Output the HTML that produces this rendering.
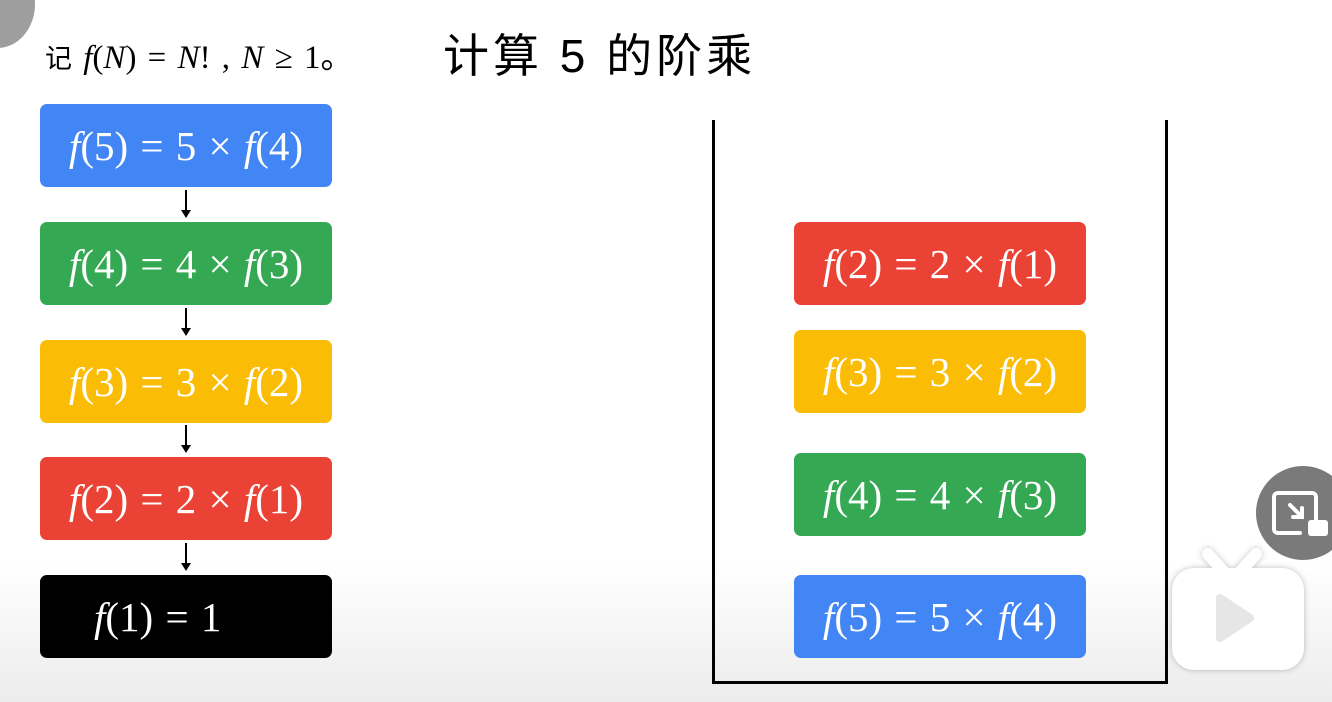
<!DOCTYPE html>
<html><head><meta charset="utf-8"><style>
body{margin:0;width:1332px;height:702px;overflow:hidden;position:relative;background:linear-gradient(#fff 0,#fff 560px,#ececec 702px);font-family:"Liberation Serif",serif}
.b{position:absolute;width:292px;height:83px;border-radius:7px;color:#fff;font-size:41px;display:flex;align-items:center;justify-content:center;white-space:nowrap;word-spacing:2px}
.b i{font-style:italic}
.bl{background:#4285f4}.g{background:#34a853}.y{background:#fbbc05}.r{background:#ea4335}.k{background:#000}
.a{position:absolute;left:185px;width:2px;height:26px;background:#000}
.a:after{content:"";position:absolute;left:-4px;bottom:-2px;border-left:5px solid transparent;border-right:5px solid transparent;border-top:8px solid #000}
.ln{position:absolute;background:#000}
</style></head><body>
<div style="position:absolute;left:-40px;top:-40px;width:75px;height:88px;border-radius:50%;background:#9e9e9e"></div>
<div style="position:absolute;left:45px;top:30px;font-size:33px;color:#000;white-space:nowrap;word-spacing:3px"><span style="font-family:'Noto Sans CJK SC',sans-serif;font-size:27px">记</span> <i>f</i>(<i>N</i>) = <i>N</i>! , <i>N</i> ≥ 1<span style="font-family:'Noto Sans CJK SC',sans-serif">。</span></div>
<div style="position:absolute;left:443px;top:20px;font-family:'Liberation Sans','Noto Sans CJK SC',sans-serif;font-size:46px;color:#000;white-space:nowrap;letter-spacing:4px">计算 5 的阶乘</div>

<div class="b bl" style="left:40px;top:104px"><span><i>f</i>(5) = 5 × <i>f</i>(4)</span></div>
<div class="a" style="top:190px"></div>
<div class="b g" style="left:40px;top:222px"><span><i>f</i>(4) = 4 × <i>f</i>(3)</span></div>
<div class="a" style="top:308px"></div>
<div class="b y" style="left:40px;top:340px"><span><i>f</i>(3) = 3 × <i>f</i>(2)</span></div>
<div class="a" style="top:425px"></div>
<div class="b r" style="left:40px;top:457px"><span><i>f</i>(2) = 2 × <i>f</i>(1)</span></div>
<div class="a" style="top:543px"></div>
<div class="b k" style="left:40px;top:575px;justify-content:flex-start"><span style="margin-left:54px"><i>f</i>(1) = 1</span></div>

<div class="ln" style="left:712px;top:120px;width:3px;height:564px"></div>
<div class="ln" style="left:1165px;top:120px;width:3px;height:564px"></div>
<div class="ln" style="left:712px;top:681px;width:456px;height:3px"></div>

<div class="b r" style="left:794px;top:222px"><span><i>f</i>(2) = 2 × <i>f</i>(1)</span></div>
<div class="b y" style="left:794px;top:330px"><span><i>f</i>(3) = 3 × <i>f</i>(2)</span></div>
<div class="b g" style="left:794px;top:453px"><span><i>f</i>(4) = 4 × <i>f</i>(3)</span></div>
<div class="b bl" style="left:794px;top:575px"><span><i>f</i>(5) = 5 × <i>f</i>(4)</span></div>

<div style="position:absolute;left:1256px;top:466px;width:94px;height:94px;border-radius:50%;background:#7a7a7a"></div>
<svg style="position:absolute;left:1270px;top:490px" width="62" height="50" viewBox="0 0 62 50"><path d="M30 3H8a4 4 0 0 0-4 4v32a4 4 0 0 0 4 4h22M46 30V7a4 4 0 0 0-4-4H28M20 15l12 12M32 18v9h-9" stroke="#fff" stroke-width="4" fill="none" stroke-linecap="round"/><rect x="38" y="30" width="20" height="16" rx="3" fill="#fff"/></svg>
<svg style="position:absolute;left:1166px;top:536px;filter:drop-shadow(0 0 3px rgba(0,0,0,0.25))" width="144" height="140" viewBox="-4 -4 144 140"><path d="M38 14l16 18M86 14l-16 18" stroke="#fff" stroke-width="12" stroke-linecap="round"/><rect x="2" y="28" width="132" height="102" rx="22" fill="#fff"/><path d="M50 58l30 20-30 20z" fill="#e6e6e6" stroke="#e6e6e6" stroke-width="8" stroke-linejoin="round"/></svg>
</body></html>
